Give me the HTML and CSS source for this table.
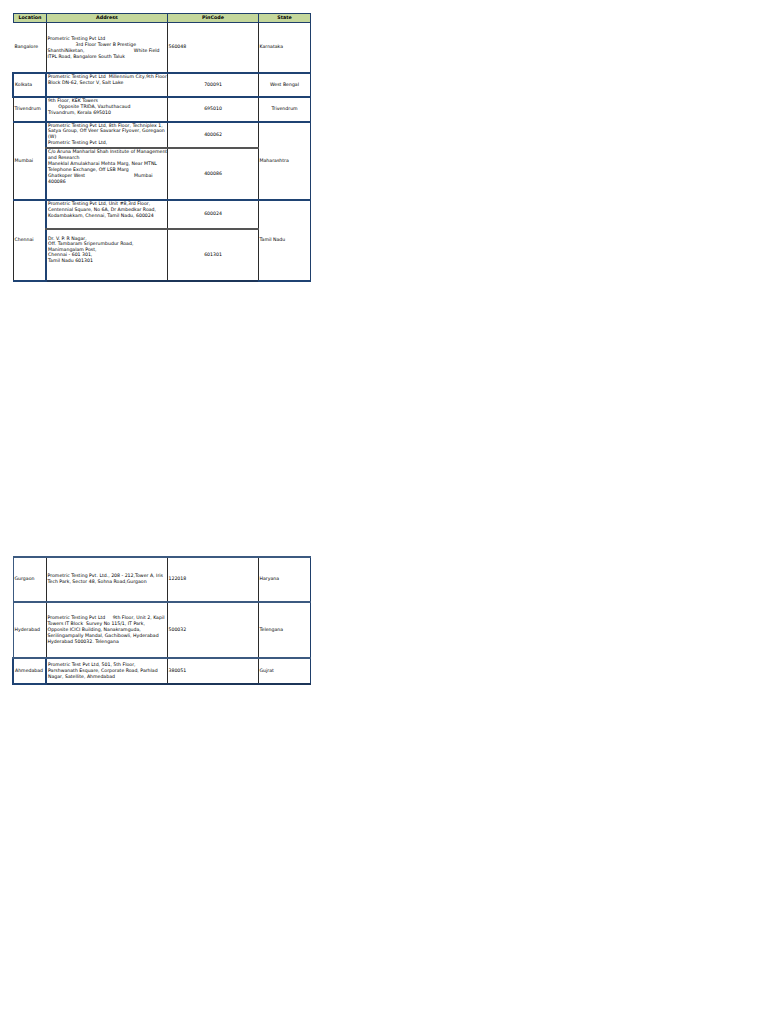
FILE: index.html
```html
<!DOCTYPE html>
<html>
<head>
<meta charset="utf-8">
<link rel="stylesheet" href="styles.css">
</head>
<body>
<div class="page">
<table class="grid first">
  <colgroup><col class="c1"><col class="c2"><col class="c3"><col class="c4"></colgroup>
  <tr class="head">
    <th>Location</th><th>Address</th><th>PinCode</th><th>State</th>
  </tr>
  <tr class="r-blr">
    <td class="loc plain">Bangalore</td>
    <td class="addr plain-l">Prometric Testing Pvt Ltd<br>&nbsp;&nbsp;&nbsp;&nbsp;&nbsp;&nbsp;&nbsp;&nbsp;&nbsp;&nbsp;&nbsp;&nbsp;&nbsp;&nbsp;&nbsp;&nbsp;&nbsp;&nbsp;&nbsp;3rd Floor Tower B Prestige<br><span class="split"><span>ShanthiNiketan,</span><span>White Field</span></span>ITPL Road, Bangalore South Taluk</td>
    <td class="pin left">560048</td>
    <td class="state left">Karnataka</td>
  </tr>
  <tr class="r-kol">
    <td class="loc boxed">Kolkata</td>
    <td class="addr top nav-l">Prometric Testing Pvt Ltd&nbsp; Millennium City,9th Floor<br>Block DN-62, Sector V, Salt Lake</td>
    <td class="pin">700091</td>
    <td class="state">West Bengal</td>
  </tr>
  <tr class="r-tvm">
    <td class="loc">Trivendrum</td>
    <td class="addr top nav-l">9th Floor, KEK Towers<br>&nbsp;&nbsp;&nbsp;&nbsp;&nbsp;&nbsp;&nbsp;Opposite TRIDA, Vazhuthacaud<br>Trivandrum, Kerala 695010</td>
    <td class="pin">695010</td>
    <td class="state">Trivendrum</td>
  </tr>
  <tr class="r-mum1">
    <td class="loc" rowspan="2">Mumbai</td>
    <td class="addr top nav-l sub">Prometric Testing Pvt Ltd, 8th Floor, Techniplex 1,<br>Satya Group, Off Veer Savarkar Flyover, Goregaon<br>(W)<br>Prometric Testing Pvt Ltd,</td>
    <td class="pin sub">400062</td>
    <td class="state left" rowspan="2">Maharashtra</td>
  </tr>
  <tr class="r-mum2">
    <td class="addr top nav-l"><span class="over">C/o Aruna Manharlal Shah Institute of Management</span><br>and Research<br>Maneklal Amulakharai Mehta Marg, Near MTNL<br>Telephone Exchange, Off LSB Marg<br><span class="split"><span>Ghatkoper West</span><span>Mumbai&nbsp;&nbsp;&nbsp;&nbsp;&nbsp;</span></span>400086</td>
    <td class="pin">400086</td>
  </tr>
  <tr class="r-che1">
    <td class="loc" rowspan="2">Chennai</td>
    <td class="addr top nav-l sub">Prometric Testing Pvt Ltd, Unit #8,3rd Floor,<br>Centennial Square, No 6A, Dr Ambedkar Road,<br>Kodambakkam, Chennai, Tamil Nadu, 600024</td>
    <td class="pin sub">600024</td>
    <td class="state left" rowspan="2">Tamil Nadu</td>
  </tr>
  <tr class="r-che2 last">
    <td class="addr nav-l">Dr. V. P. R Nagar,<br>Off. Tambaram Sriperumbudur Road,<br>Manimangalam Post,<br>Chennai - 601 301,<br>Tamil Nadu 601301</td>
    <td class="pin">601301</td>
  </tr>
</table>

<table class="grid second">
  <colgroup><col class="c1"><col class="c2"><col class="c3"><col class="c4"></colgroup>
  <tr class="r-gur">
    <td class="loc">Gurgaon</td>
    <td class="addr">Prometric Testing Pvt. Ltd., 208 - 212,Tower A, Iris<br>Tech Park, Sector 48, Sohna Road,Gurgaon</td>
    <td class="pin left">122018</td>
    <td class="state left">Haryana</td>
  </tr>
  <tr class="r-hyd">
    <td class="loc">Hyderabad</td>
    <td class="addr">Prometric Testing Pvt Ltd&nbsp;&nbsp;&nbsp;&nbsp; 9th Floor, Unit 2, Kapil<br>Towers IT Block&nbsp; Survey No 115/1, IT Park,<br>Opposite ICICI Building, Nanakramguda,<br>Serilingampally Mandal, Gachibowli, Hyderabad<br>Hyderabad 500032. Telengana</td>
    <td class="pin left">500032</td>
    <td class="state left">Telengana</td>
  </tr>
  <tr class="r-ahm last">
    <td class="loc boxed">Ahmedabad</td>
    <td class="addr nav-l">Prometric Test Pvt Ltd, 501, 5th Floor,<br>Parshwanath Esquare, Corporate Road, Parhlad<br>Nagar, Satellite, Ahmedabad</td>
    <td class="pin left">380051</td>
    <td class="state left">Gujrat</td>
  </tr>
</table>
</div>
</body>
</html>
```

FILE: styles.css
```css
html, body {
  margin: 0;
  padding: 0;
  background: #ffffff;
}

.page {
  padding: 13px 0 0 12px;
  font-family: "DejaVu Sans", "Liberation Sans", sans-serif;
  color: #000000;
}

.grid {
  border-collapse: collapse;
  table-layout: fixed;
  width: 297px;
  font-size: 4.65px;
  line-height: 6px;
}

.grid .c1 { width: 33px; }
.grid .c2 { width: 121px; }
.grid .c3 { width: 91px; }
.grid .c4 { width: 52px; }

.grid th,
.grid td {
  padding: 0 0 0 1px;
  vertical-align: middle;
  text-align: center;
  border-left: 1px solid #2b2b2b;
  border-right: 1px solid #2b2b2b;
  border-bottom: 2px solid #1f4373;
  white-space: nowrap;
  overflow: visible;
}

.grid .head th {
  height: 8px;
  background: #c4d79b;
  font-weight: bold;
  font-size: 4.8px;
  line-height: 8px;
  color: #000;
  border: 1px solid #1f3f6b;
}

.grid td.loc,
.grid td.addr,
.grid td.left {
  text-align: left;
}

.grid td.top {
  vertical-align: top;
}

.grid td.plain {
  border-left: 1px solid #ffffff;
}

.grid td.plain-l {
  border-left: 1px solid #ffffff;
}

.grid td.nav-l {
  border-left: 2px solid #1f4373;
}

.grid td.boxed {
  border: 2px solid #1f4373;
}

.grid td.sub {
  border-bottom: 2px solid #555555;
}

.grid tr.last td {
  border-bottom: 2px solid #1c3558;
}

.grid td.state {
  border-right: 1px solid #1f3f6b;
}

.split {
  display: flex;
  justify-content: space-between;
  width: 112px;
}

.over {
  position: relative;
  z-index: 1;
}

.r-blr { height: 50px; }
.r-blr td.addr { padding-top: 2px; }
.r-kol { height: 24px; }
.r-tvm { height: 25px; }
.r-mum1 { height: 26px; }
.r-mum1 td.addr { line-height: 5.8px; }
.r-mum2 { height: 52px; }
.r-mum2 td.addr { line-height: 6px; padding-bottom: 8px; }
.r-che1 { height: 29px; }
.r-che2 { height: 52px; }
.r-che2 td.addr { vertical-align: top; padding-top: 6px; line-height: 5.6px; }

.second {
  margin-top: 274px;
  border-top: 2px solid #3c5a80;
}

.second td {
  border-bottom: 2px solid #3c5a80;
}

.second td.loc {
  border-left: 1px solid #3c5a80;
}

.second td.addr {
  border-left: 1px solid #ffffff;
}

.second td.addr.nav-l {
  border-left: 2px solid #1f4373;
}

.second td.loc.boxed {
  border: 2px solid #1f4373;
}

.r-gur { height: 45px; }
.r-hyd { height: 56px; }
.r-ahm { height: 26px; }
```
